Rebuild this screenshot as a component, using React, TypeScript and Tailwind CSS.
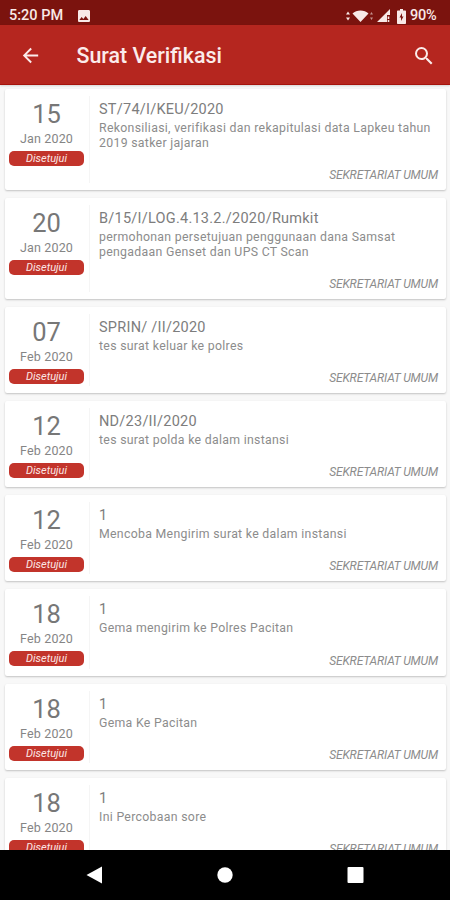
import { MdArrowBack, MdImage, MdSearch } from 'react-icons/md'

type Letter = {
  day: string
  month: string
  number: string
  lines: string[]
}

const letters: Letter[] = [
  {
    day: '15',
    month: 'Jan 2020',
    number: 'ST/74/I/KEU/2020',
    lines: ['Rekonsiliasi, verifikasi dan rekapitulasi data Lapkeu tahun', '2019 satker jajaran'],
  },
  {
    day: '20',
    month: 'Jan 2020',
    number: 'B/15/I/LOG.4.13.2./2020/Rumkit',
    lines: ['permohonan persetujuan penggunaan dana Samsat', 'pengadaan Genset dan UPS CT Scan'],
  },
  { day: '07', month: 'Feb 2020', number: 'SPRIN/ /II/2020', lines: ['tes surat keluar ke polres'] },
  { day: '12', month: 'Feb 2020', number: 'ND/23/II/2020', lines: ['tes surat polda ke dalam instansi'] },
  { day: '12', month: 'Feb 2020', number: '1', lines: ['Mencoba Mengirim surat ke dalam instansi'] },
  { day: '18', month: 'Feb 2020', number: '1', lines: ['Gema mengirim ke Polres Pacitan'] },
  { day: '18', month: 'Feb 2020', number: '1', lines: ['Gema Ke Pacitan'] },
  { day: '18', month: 'Feb 2020', number: '1', lines: ['Ini Percobaan sore'] },
]

function StatusBar() {
  return (
    <div className="flex h-[25px] shrink-0 items-center bg-[#7b130e] pt-[7px] pr-3 pl-[9px] text-[14.5px] leading-none font-medium text-[#f8e9e7]">
      <span className="w-[56px] pt-px whitespace-nowrap">5:20 PM</span>
      <MdImage className="ml-[11px] size-4" />
      <svg viewBox="0 0 48 18" className="mr-[3px] ml-auto h-[18px] w-12" fill="currentColor">
        <path d="M0 7.500l2-3 2 3zM0 10.500h4l-2 3zM6.500 6.500C10.500 2.500 18.500 2.500 22.500 6.500L14.500 15z" />
        <path opacity=".6" d="M24 7.500l1.500-2.500 1.500 2.500zM24 10.500h3L25.500 13z" />
        <path d="M31 15L44 2v6h-3v7z" />
        <path d="M41.700 9.500h1.600v2.500h-1.600zM41.700 13h1.600v2h-1.600z" />
      </svg>
      <svg viewBox="0 0 9 15" className="mr-1 h-[15px] w-[9px]">
        <path
          fill="currentColor"
          fillRule="evenodd"
          d="M3 0h3v1.500h2c.6 0 1 .4 1 1V14c0 .6-.4 1-1 1H1c-.6 0-1-.4-1-1V2.500c0-.6.4-1 1-1h2zM5 4L2.500 8.500H4V12l2.500-4.500H5z"
        />
      </svg>
      <span className="w-[28px] pt-px whitespace-nowrap tracking-[-0.2px]">90%</span>
    </div>
  )
}

function AppBar() {
  return (
    <header className="z-10 flex h-[60px] shrink-0 items-center border-b border-[#a5130c] bg-[#b5261f] pt-0.5 pr-[14px] pl-[19px] text-[#fbeceb] shadow-[0_1px_2px_rgba(0,0,0,0.15)]">
      <MdArrowBack className="size-[23px]" />
      <h1 className="ml-[34.5px] pt-px text-[21.4px] leading-none font-medium whitespace-nowrap">
        Surat Verifikasi
      </h1>
      <MdSearch className="ml-auto size-6" />
    </header>
  )
}

function LetterCard({ letter }: { letter: Letter }) {
  return (
    <article
      className={`flex shrink-0 rounded-[2px] bg-white shadow-[0_1px_2px_rgba(0,0,0,0.22)] ${
        letter.lines.length > 1 ? 'h-[101.2px]' : 'h-[86.2px]'
      }`}
    >
      <div className="my-[7px] flex w-[85px] shrink-0 flex-col items-center border-r border-[#f5f5f5] pt-[3px] pr-px">
        <span className="text-[25.5px] leading-[30px] text-[#777]">{letter.day}</span>
        <span className="text-[12.5px] leading-5 tracking-[0.15px] text-[#858585]">
          {letter.month}
        </span>
        <span className="mt-[2px] flex h-[15px] w-[75px] shrink-0 items-center justify-center rounded-[5px] bg-[#c2342b] text-[11px] leading-none text-[#fbe7e5] italic">
          Disetujui
        </span>
      </div>
      <div className="flex min-w-0 flex-1 flex-col pt-[11px] pr-2 pb-[7px] pl-[9px]">
        <h2 className="text-[14.5px] leading-[20px] tracking-[0.25px] whitespace-nowrap text-[#7d7d7d]">
          {letter.number}
        </h2>
        <p className="pt-px text-[12.3px] leading-[15px] tracking-[0.3px] whitespace-nowrap text-[#8c8c8c]">
          {letter.lines.map((line) => (
            <span key={line} className="block">
              {line}
            </span>
          ))}
        </p>
        <span className="mt-auto self-end text-[12px] leading-4 tracking-[-0.15px] whitespace-nowrap text-[#8c8c8c] italic">
          SEKRETARIAT UMUM
        </span>
      </div>
    </article>
  )
}

function NavigationBar() {
  return (
    <nav className="z-10 flex h-[50px] shrink-0 items-center bg-black text-white">
      <svg viewBox="0 0 450 50" className="h-[50px] w-full" fill="currentColor">
        <path d="M86.500 25L102 16.500V33.500z" />
        <circle cx="225" cy="25" r="7.700" />
        <rect x="347.500" y="17" width="16" height="16" rx="1" />
      </svg>
    </nav>
  )
}

export default function App() {
  return (
    <div className="flex h-[900px] w-[450px] flex-col overflow-hidden bg-[#f8f8f8] font-['Roboto',sans-serif]">
      <StatusBar />
      <AppBar />
      <main className="flex min-h-0 flex-1 flex-col gap-2 overflow-hidden pt-[3.5px] pr-[4px] pl-[5px]">
        {letters.map((letter, index) => (
          <LetterCard key={index} letter={letter} />
        ))}
      </main>
      <NavigationBar />
    </div>
  )
}
